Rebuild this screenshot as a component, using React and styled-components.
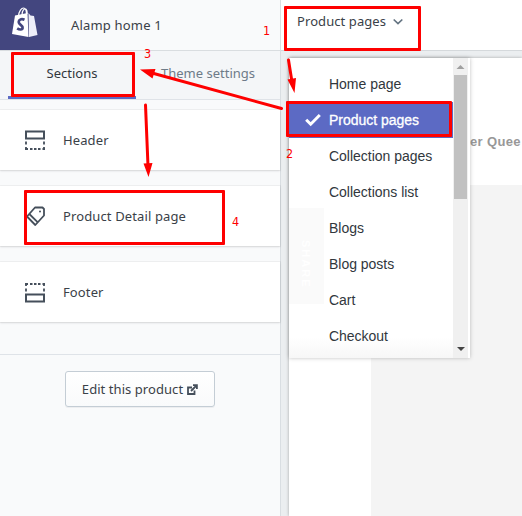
import React from "react";
import styled, { createGlobalStyle } from "styled-components";

const GlobalStyle = createGlobalStyle`
  * { box-sizing: border-box; }
  body { margin: 0; overflow: hidden; background: #ebeef0; }
`;

const Editor = styled.div`
  position: relative;
  display: grid;
  grid-template-columns: 281px 1fr;
  width: 522px;
  height: 516px;
  overflow: hidden;
  font-family: "Noto Sans", "Open Sans", sans-serif;
  font-size: 13px;
  color: #3a4148;
  white-space: nowrap;
`;

const Sidebar = styled.aside`
  display: flex;
  flex-direction: column;
  background: #f9fafb;
  border-right: 1px solid #d9dee2;
`;

const Brand = styled.header`
  display: flex;
  align-items: center;
  height: 51px;
  border-bottom: 1px solid #d9dde0;
`;

const LogoTile = styled.div`
  display: flex;
  width: 50px;
  height: 50px;
  background: #43467f;
`;

const ThemeName = styled.span`
  margin-left: 21px;
  letter-spacing: 0.18px;
`;

const Tabs = styled.nav`
  display: flex;
  height: 49px;
  padding-left: 8px;
  background: #f4f6f8;
  border-bottom: 1px solid #dfe3e8;
`;

const Tab = styled.div`
  width: ${(p) => p.$width};
  height: 48px;
  line-height: 44px;
  text-align: center;
  color: ${(p) => (p.$active ? "#31373d" : "#6e7b88")};
  border-bottom: 3px solid ${(p) => (p.$active ? "#5c6ac4" : "transparent")};
`;

const SectionList = styled.div`
  display: flex;
  flex-direction: column;
  gap: 16px;
  padding: 10px 0 32px;
  border-bottom: 1px solid #dfe3e8;
`;

const SectionRow = styled.div`
  display: flex;
  align-items: center;
  gap: 17px;
  height: 60px;
  padding-left: 25px;
  background: #fff;
  box-shadow: 0 0 0 1px rgba(63, 63, 68, 0.05), 0 1px 2px rgba(63, 63, 68, 0.15);
  letter-spacing: 0.12px;
  svg { margin-top: 1px; }
`;

const EditButton = styled.button`
  display: flex;
  align-items: center;
  justify-content: center;
  gap: 4px;
  width: 150px;
  height: 36px;
  margin: 16px 0 0 65px;
  padding: 0;
  border: 1px solid #c4cdd5;
  border-radius: 3px;
  background: linear-gradient(#fff, #f9fafb);
  box-shadow: 0 1px 0 rgba(22, 29, 37, 0.05);
  font: inherit;
  letter-spacing: 0.06px;
  color: #3a4148;
`;

const Main = styled.main`
  position: relative;
  display: flex;
  flex-direction: column;
`;

const TopBar = styled.header`
  display: flex;
  align-items: flex-start;
  gap: 7px;
  height: 51px;
  padding: 12px 0 0 16px;
  background: #fff;
  border-bottom: 1px solid #d5d9dc;
  line-height: 18px;
  letter-spacing: 0.08px;
  svg { margin-top: 6px; }
`;

const Preview = styled.div`
  flex: 1;
  display: flex;
  flex-direction: column;
  margin: 7px 0 0 8px;
  background: #fff;
  box-shadow: 0 0 3px rgba(0, 0, 0, 0.3);
`;

const PreviewHeading = styled.div`
  height: 127px;
  padding: 74px 0 0 181px;
  font: bold 13px/20px "Liberation Sans", Arial, sans-serif;
  letter-spacing: 0.35px;
  color: #989898;
`;

const PreviewImage = styled.div`
  flex: 1;
  margin-left: 82px;
  background: #f4f4f4;
`;

const Menu = styled.div`
  position: absolute;
  left: 8px;
  top: 58px;
  display: flex;
  width: 181px;
  height: 300px;
  padding-right: 2px;
  background: #fff;
  box-shadow: 0 0 4px rgba(0, 0, 0, 0.25);
  font: 14px/36px "Liberation Sans", Arial, sans-serif;
  letter-spacing: -0.02px;
`;

const Options = styled.div`
  position: relative;
  flex: 1;
  padding-top: 8px;
  background: linear-gradient(#fff 93%, #f7f7f7);
`;

const Option = styled.div`
  position: relative;
  display: flex;
  align-items: center;
  height: 36px;
  padding-left: ${(p) => (p.$selected ? "16px" : "40px")};
  color: ${(p) => (p.$selected ? "#fff" : "#31373d")};
  background: ${(p) => (p.$selected ? "#5c6ac4" : "transparent")};
  -webkit-text-stroke: ${(p) => (p.$selected ? "0.3px" : "0")};
  svg { margin-right: 8px; }
`;

const ShareTab = styled.div`
  position: absolute;
  left: 0;
  top: 150px;
  width: 35px;
  height: 96px;
  padding-top: 16px;
  background: #fafafa;
  color: #fff;
  font: bold 11px/37px "Liberation Sans", Arial, sans-serif;
  letter-spacing: 2px;
  text-align: center;
  writing-mode: vertical-rl;
`;

const Scrollbar = styled.div`
  display: flex;
  flex-direction: column;
  align-items: center;
  justify-content: space-between;
  width: 15px;
  background: #f0f0f0;
`;

const ScrollTop = styled.div`
  display: flex;
  flex-direction: column;
  align-items: center;
`;

const Thumb = styled.div`
  width: 13px;
  height: 124px;
  background: #c1c1c1;
`;

const Highlight = styled.div`
  position: absolute;
  left: ${(p) => p.$x}px;
  top: ${(p) => p.$y}px;
  width: ${(p) => p.$w}px;
  height: ${(p) => p.$h}px;
  border: 3px solid #fe0000;
  border-radius: 1px;
`;

const Step = styled.span`
  position: absolute;
  left: ${(p) => p.$x}px;
  top: ${(p) => p.$y}px;
  font: 12.5px/16px "DejaVu Sans Condensed", "DejaVu Sans", sans-serif;
  color: #fe0000;
`;

const Arrows = styled.svg`
  position: absolute;
  inset: 0;
`;

const ShopifyBag = () => (
  <svg width="50" height="50" viewBox="0 0 50 50">
    <path d="M15 15.500 27.500 13 28.500 37 12 34Z" fill="#fff" />
    <path d="M28.500 13 30.500 15.500 34 16 37.500 35 29 37Z" fill="#eeeef8" />
    <path d="M18.500 16C19 11 21.500 8 23.500 8S26.500 11 26.500 15M22 15C22 10.500 24.500 8 26 9.200c1 1 1.200 2.500 1.300 4.500" fill="none" stroke="#fff" strokeWidth="1.2" />
    <path d="M24.500 19.800C21.500 18.500 18.700 19.500 18.700 22c0 2.700 4.200 3 3.900 5.800-.2 2.100-3 2.200-5.400.5" fill="none" stroke="#43467f" strokeWidth="2.700" />
  </svg>
);

const BlockIcon = ({ footer }) => (
  <svg width="21" height="21" viewBox="0 0 21 21" fill="none" stroke="#454f5b" strokeWidth="2">
    <g transform={footer ? "matrix(1 0 0 -1 0 21)" : undefined}>
      <path d="M1 1.500h18v7H1z" />
      <path d="M1 11.500v3M19 11.500v3M1 17v2.500M19 17v2.500M0 19h3M5 19h2.500M9 19h2.500M13 19h2.500M17.500 19H20" strokeWidth="1.800" />
    </g>
  </svg>
);

const TagIcon = () => (
  <svg width="21" height="21" viewBox="0 0 21 21" fill="none" stroke="#454f5b" strokeWidth="1.800" strokeLinejoin="round">
    <path d="M10 1.500H17.500L19 3V9.500L10.300 19 2 10.500Z" />
    <path d="M4.300 8 12.800 16.300" />
    <circle cx="15" cy="5.500" r="1" fill="#454f5b" stroke="none" />
  </svg>
);

const ExternalIcon = () => (
  <svg width="11" height="11" viewBox="0 0 11 11" fill="none" stroke="#454f5b" strokeWidth="1.800">
    <path d="M5 3.500H1V10h6.500V6.500M4 7 9 2M6 1.100h3.900V5" />
  </svg>
);

const sections = [
  { label: "Header", icon: <BlockIcon /> },
  { label: "Product Detail page", icon: <TagIcon /> },
  { label: "Footer", icon: <BlockIcon footer /> },
];

const pages = ["Home page", "Product pages", "Collection pages", "Collections list", "Blogs", "Blog posts", "Cart", "Checkout"];

const steps = [
  { n: 1, x: 263, y: 23, box: [284, 6, 137, 45] },
  { n: 2, x: 286, y: 146, box: [286, 101, 166, 36] },
  { n: 3, x: 144, y: 46, box: [11, 52, 124, 45] },
  { n: 4, x: 232, y: 214, box: [24, 190, 201, 55] },
];

export default function App() {
  return (
    <Editor>
      <GlobalStyle />
      <Sidebar>
        <Brand>
          <LogoTile><ShopifyBag /></LogoTile>
          <ThemeName>Alamp home 1</ThemeName>
        </Brand>
        <Tabs>
          <Tab $active $width="128px">Sections</Tab>
          <Tab $width="144px">Theme settings</Tab>
        </Tabs>
        <SectionList>
          {sections.map((s) => (
            <SectionRow key={s.label}>{s.icon}<span>{s.label}</span></SectionRow>
          ))}
        </SectionList>
        <EditButton>Edit this product <ExternalIcon /></EditButton>
      </Sidebar>
      <Main>
        <TopBar>
          Product pages
          <svg width="10" height="8" viewBox="0 0 10 8" fill="none" stroke="#637381" strokeWidth="1.700"><path d="m.7 1.500 4.300 4 4.300-4" /></svg>
        </TopBar>
        <Preview>
          <PreviewHeading>er Quee</PreviewHeading>
          <PreviewImage />
        </Preview>
        <Menu>
          <Options>
            <ShareTab>SHARE</ShareTab>
            {pages.map((page) => (
              <Option key={page} $selected={page === "Product pages"}>
                {page === "Product pages" && (
                  <svg width="16" height="14" viewBox="0 0 16 14" fill="none" stroke="#fff" strokeWidth="3"><path d="m1.200 6.700 4.500 4.500L14.800 2" /></svg>
                )}
                {page}
              </Option>
            ))}
          </Options>
          <Scrollbar>
            <ScrollTop>
              <svg width="13" height="17" viewBox="0 0 13 17"><path d="M2.500 11 6.500 7l4 4z" fill="#a0a0a0" /></svg>
              <Thumb />
            </ScrollTop>
            <svg width="13" height="17" viewBox="0 0 13 17"><path d="M3 6h8L7 10z" fill="#444" /></svg>
          </Scrollbar>
        </Menu>
      </Main>
      {steps.map(({ n, x, y, box }) => (
        <React.Fragment key={n}>
          <Highlight $x={box[0]} $y={box[1]} $w={box[2]} $h={box[3]} />
          <Step $x={x} $y={y}>{n}</Step>
        </React.Fragment>
      ))}
      <Arrows width="522" height="516" viewBox="0 0 522 516" stroke="#fe0000" fill="#fe0000" strokeWidth="3" strokeLinecap="round">
        <path d="M288.500 60 292 82M281.500 108.500 152 73M145.500 105 148 166" />
        <path stroke="none" d="M287.500 79.500 296 78 294.500 93ZM140 69.500 155.500 69 152.500 78.500ZM143.500 163.500 152.500 163 148.500 177Z" />
      </Arrows>
    </Editor>
  );
}
